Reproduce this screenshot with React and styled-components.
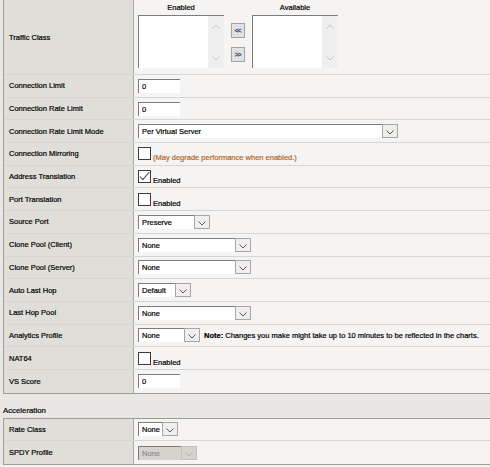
import styled, { createGlobalStyle } from 'styled-components';

const GlobalStyle = createGlobalStyle`
  html, body {
    margin: 0;
    padding: 0;
    background: #f3f2ef;
  }
  body {
    font-family: "Liberation Sans", Arial, sans-serif;
    font-size: 7.5px;
    color: #000;
    -webkit-text-stroke: 0.2px currentColor;
  }
`;

const Root = styled.div`
  background: #e8e7e3;
  padding-left: 3px;
`;

const Table = styled.div`
  display: flex;
  flex-direction: column;
  border-left: 1px solid #a0a0a0;
  border-bottom: 1px solid #9c9c9c;
  border-top: ${(p) => (p.$top ? '1px solid #9c9c9c' : 'none')};
`;

const Row = styled.div`
  display: flex;
  box-sizing: border-box;
  height: ${(p) => p.$h || 22.7}px;
  border-bottom: ${(p) => (p.$last ? 'none' : '1px solid #d6d6d6')};
`;

const Label = styled.div`
  flex: none;
  width: 130px;
  box-sizing: border-box;
  display: flex;
  align-items: center;
  padding-left: 5px;
  background: #dfded9;
  border-right: 1px solid #a8a8a8;
`;

const Value = styled.div`
  flex: 1;
  display: flex;
  align-items: ${(p) => (p.$top ? 'flex-start' : 'center')};
  padding-left: 4px;
  background: #f5f4f2;
  gap: 4px;
`;

const Heading = styled.div`
  height: 24px;
  box-sizing: border-box;
  display: flex;
  align-items: flex-end;
  padding-bottom: 3px;
  margin-left: -3px;
  padding-left: 3px;
  font-size: 7.8px;
  background: #e8e7e3;
`;

const TextInput = styled.input`
  width: 42px;
  height: 14px;
  box-sizing: border-box;
  border: none;
  border-top: 1px solid #7c7c7c;
  border-left: 1px solid #7c7c7c;
  background: #fff;
  padding: 0 0 0 3px;
  font-family: inherit;
  font-size: 7.5px;
  color: #000;
  -webkit-text-stroke: 0.2px #000;
  outline: none;
`;

const SelectBox = styled.div`
  display: flex;
  width: ${(p) => p.$w}px;
  height: 14px;
  flex: none;
`;

const SelectValue = styled.div`
  flex: 1;
  box-sizing: border-box;
  display: flex;
  align-items: center;
  padding-left: 3px;
  border-top: 1px solid #7c7c7c;
  border-left: 1px solid #7c7c7c;
  background: ${(p) => (p.$disabled ? '#d6d3ce' : '#fff')};
  color: ${(p) => (p.$disabled ? '#8e8e8e' : '#000')};
`;

const SelectButton = styled.div`
  width: 16px;
  flex: none;
  box-sizing: border-box;
  display: flex;
  align-items: flex-end;
  justify-content: center;
  padding-bottom: 2px;
  border: 1px solid ${(p) => (p.$disabled ? '#c4c1bb' : '#a6a6a6')};
  background: ${(p) => (p.$disabled ? '#d6d3ce' : '#f0efed')};
`;

const CheckWrap = styled.div`
  display: flex;
  align-items: flex-end;
  gap: 2px;
`;

const CheckBox = styled.div`
  width: 13px;
  height: 13px;
  box-sizing: border-box;
  border: 1px solid #3c3c3c;
  background: #fff;
  display: flex;
  align-items: center;
  justify-content: center;
`;

const CheckText = styled.span`
  line-height: 8px;
  margin-bottom: -2px;
  color: ${(p) => (p.$warn ? '#b4672a' : '#000')};
`;

const Note = styled.span`
  white-space: nowrap;
  b {
    font-weight: bold;
  }
`;

const ListGroup = styled.div`
  display: flex;
  flex-direction: column;
  align-items: center;
  padding-top: 3px;
`;

const ListCaption = styled.div`
  height: 12px;
  line-height: 10px;
`;

const ListBox = styled.div`
  width: 86px;
  height: 53px;
  box-sizing: border-box;
  border-top: 1px solid #7c7c7c;
  border-left: 1px solid #7c7c7c;
  background: #fff;
  display: flex;
  justify-content: flex-end;
`;

const ScrollTrack = styled.div`
  width: 16px;
  background: #efefef;
  display: flex;
  flex-direction: column;
  justify-content: space-between;
  align-items: center;
  padding: 8px 0 7px;
`;

const MoveButtons = styled.div`
  display: flex;
  flex-direction: column;
  gap: 9px;
  padding-top: 23px;
  margin: 0 3px 0 3px;
`;

const MoveButton = styled.div`
  width: 14px;
  height: 15px;
  box-sizing: border-box;
  border: 1px solid #a3a3a3;
  background: #e2e2e2;
  display: flex;
  align-items: center;
  justify-content: center;
  font-size: 7px;
  letter-spacing: -1.2px;
  padding-right: 1px;
  color: #1d3d78;
`;

const Chevron = ({ up, color = '#555' }) => (
  <svg width="8" height="5" viewBox="0 0 8 5">
    <polyline
      points={up ? '0.5,4.5 4,1 7.5,4.5' : '0.5,0.5 4,4 7.5,0.5'}
      fill="none"
      stroke={color}
      strokeWidth="1"
    />
  </svg>
);

const Select = ({ w, value, disabled }) => (
  <SelectBox $w={w}>
    <SelectValue $disabled={disabled}>{value}</SelectValue>
    <SelectButton $disabled={disabled}>
      <Chevron color={disabled ? '#b5b2ad' : '#555'} />
    </SelectButton>
  </SelectBox>
);

const Check = ({ checked, text, warn }) => (
  <CheckWrap>
    <CheckBox>
      {checked && (
        <svg width="11" height="11" viewBox="0 0 11 11">
          <polyline points="1,5.5 3.8,8.6 10.4,1" fill="none" stroke="#4a4a4a" strokeWidth="1.1" />
        </svg>
      )}
    </CheckBox>
    <CheckText $warn={warn}>{text}</CheckText>
  </CheckWrap>
);

const rows = [
  ['Connection Limit', <TextInput defaultValue="0" />],
  ['Connection Rate Limit', <TextInput defaultValue="0" />],
  ['Connection Rate Limit Mode', <Select w={260} value="Per Virtual Server" />],
  ['Connection Mirroring', <Check text="(May degrade performance when enabled.)" warn />],
  ['Address Translation', <Check checked text="Enabled" />],
  ['Port Translation', <Check text="Enabled" />],
  ['Source Port', <Select w={72} value="Preserve" />],
  ['Clone Pool (Client)', <Select w={113} value="None" />],
  ['Clone Pool (Server)', <Select w={113} value="None" />],
  ['Auto Last Hop', <Select w={53} value="Default" />],
  ['Last Hop Pool', <Select w={113} value="None" />],
  [
    'Analytics Profile',
    <>
      <Select w={62} value="None" />
      <Note>
        <b>Note:</b> Changes you make might take up to 10 minutes to be reflected in the charts.
      </Note>
    </>,
  ],
  ['NAT64', <Check text="Enabled" />],
  ['VS Score', <TextInput defaultValue="0" />],
];

const App = () => (
  <Root>
    <GlobalStyle />
    <Table>
      <Row $h={75}>
        <Label>Traffic Class</Label>
        <Value $top>
          <ListGroup>
            <ListCaption>Enabled</ListCaption>
            <ListBox>
              <ScrollTrack>
                <Chevron up color="#c6c6c6" />
                <Chevron color="#c6c6c6" />
              </ScrollTrack>
            </ListBox>
          </ListGroup>
          <MoveButtons>
            <MoveButton>&lt;&lt;</MoveButton>
            <MoveButton>&gt;&gt;</MoveButton>
          </MoveButtons>
          <ListGroup>
            <ListCaption>Available</ListCaption>
            <ListBox>
              <ScrollTrack>
                <Chevron up color="#c6c6c6" />
                <Chevron color="#c6c6c6" />
              </ScrollTrack>
            </ListBox>
          </ListGroup>
        </Value>
      </Row>
      {rows.map(([label, control], i) => (
        <Row key={label} $last={i === rows.length - 1}>
          <Label>{label}</Label>
          <Value>{control}</Value>
        </Row>
      ))}
    </Table>
    <Heading>Acceleration</Heading>
    <Table $top>
      <Row>
        <Label>Rate Class</Label>
        <Value>
          <Select w={40} value="None" />
        </Value>
      </Row>
      <Row $last>
        <Label>SPDY Profile</Label>
        <Value>
          <Select w={59} value="None" disabled />
        </Value>
      </Row>
    </Table>
  </Root>
);

export default App;
